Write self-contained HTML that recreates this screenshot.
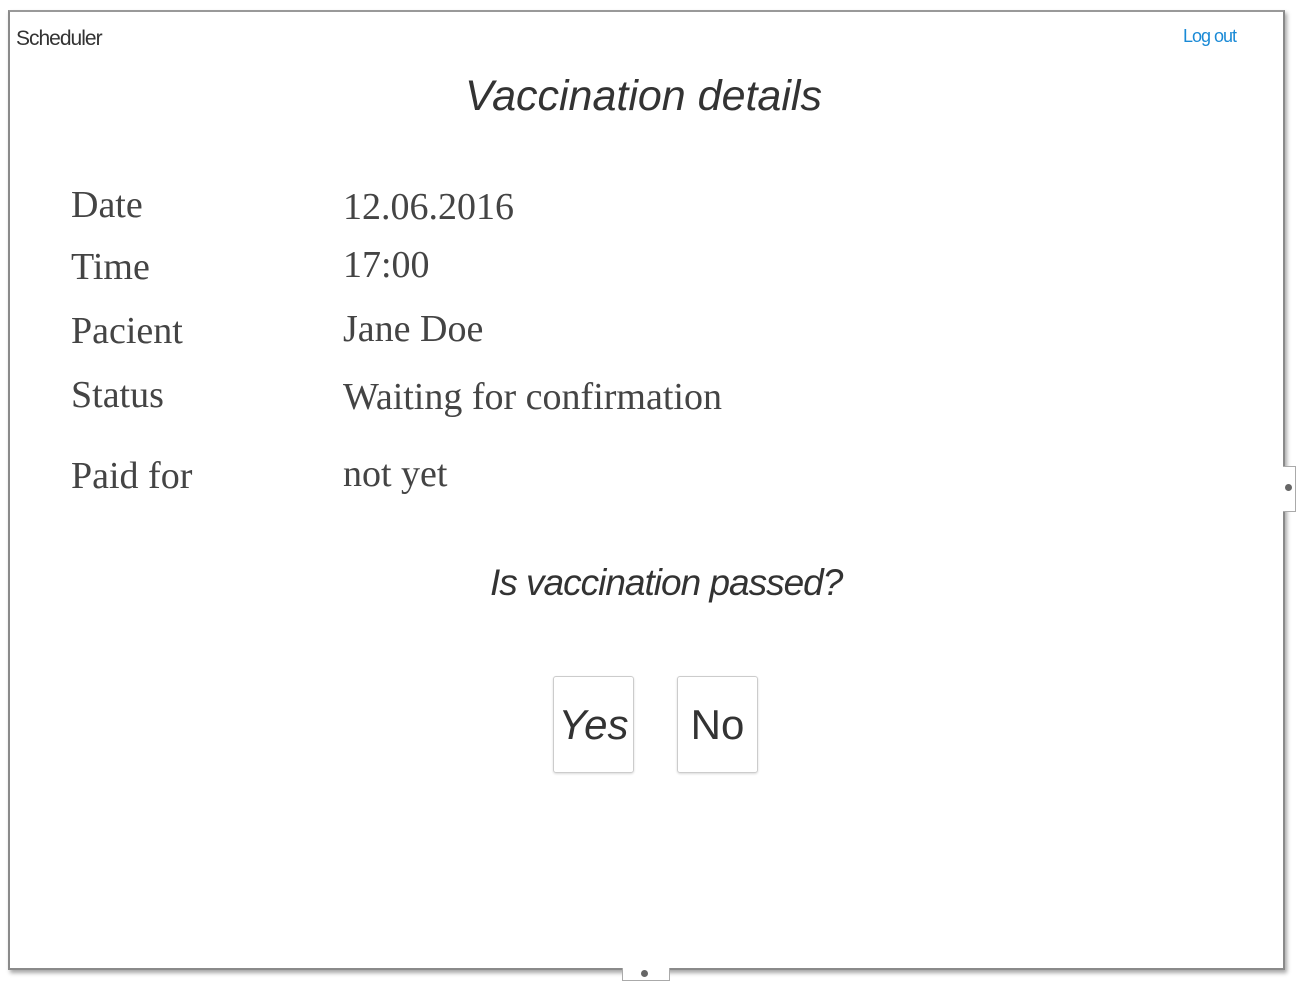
<!DOCTYPE html>
<html><head><style>
body{margin:0;width:1298px;height:982px;background:#fff;position:relative;overflow:hidden;font-family:"Liberation Sans",sans-serif}
.frame{position:absolute;left:8px;top:10px;width:1273px;height:956px;border:2px solid #8a8a8a;border-top-color:#999;box-shadow:2px 3px 4px rgba(0,0,0,.35);background:#fff}
.t{position:absolute;white-space:nowrap}
.hand{font-family:"Liberation Sans",sans-serif;color:#333}
.s{font-family:"Liberation Serif",serif;font-size:38px;color:#444}
.btn{position:absolute;width:79px;height:95px;border:1px solid #ccc;border-radius:3px;box-shadow:0 1px 2px rgba(0,0,0,.15);font-size:42px;color:#333;text-align:center;line-height:95px}
</style></head><body>
<div class="frame"></div>
<div class="t hand" style="left:16px;top:27px;font-size:21px;letter-spacing:-1px">Scheduler</div>
<div class="t hand" style="left:1183px;top:26px;font-size:18px;color:#1a8ad6;letter-spacing:-1px">Log out</div>
<div class="t hand" style="left:465px;top:72px;font-size:43px;font-style:italic;letter-spacing:0px">Vaccination details</div>
<div class="t s" style="left:71px;top:183px">Date</div>
<div class="t s" style="left:343px;top:185px">12.06.2016</div>
<div class="t s" style="left:71px;top:245px">Time</div>
<div class="t s" style="left:343px;top:243px">17:00</div>
<div class="t s" style="left:71px;top:309px">Pacient</div>
<div class="t s" style="left:343px;top:307px">Jane Doe</div>
<div class="t s" style="left:71px;top:373px">Status</div>
<div class="t s" style="left:343px;top:375px">Waiting for confirmation</div>
<div class="t s" style="left:71px;top:454px">Paid for</div>
<div class="t s" style="left:343px;top:452px">not yet</div>
<div class="t hand" style="left:490px;top:562px;font-size:37px;font-style:italic;letter-spacing:-1px">Is vaccination passed?</div>
<div class="btn hand" style="left:553px;top:676px;font-style:italic">Yes</div>
<div class="btn hand" style="left:677px;top:676px">No</div>
<div style="position:absolute;left:1283px;top:466px;width:12px;height:44px;background:#fff;border:1px solid #aaa;border-left:none"></div>
<div style="position:absolute;left:1285px;top:484px;width:7px;height:7px;border-radius:50%;background:#666"></div>
<div style="position:absolute;left:622px;top:968px;width:46px;height:12px;background:#fff;border:1px solid #aaa;border-top:none"></div>
<div style="position:absolute;left:641px;top:970px;width:7px;height:7px;border-radius:50%;background:#666"></div>
</body></html>
